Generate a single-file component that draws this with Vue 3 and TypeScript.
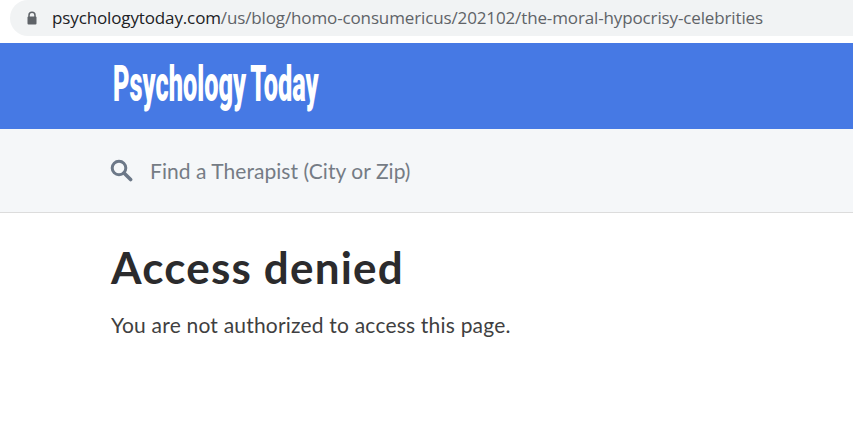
<script setup lang="ts">
const host = 'psychologytoday.com'
const path = '/us/blog/homo-consumericus/202102/the-moral-hypocrisy-celebrities'
</script>

<template>
  <div class="page">
    <div class="chrome">
      <div class="omnibox">
        <svg class="lock" width="12" height="14" viewBox="0 0 12 14" aria-hidden="true">
          <path d="M3 6V4.2a3 3 0 0 1 6 0V6" fill="none" stroke="#5f6368" stroke-width="1.5" />
          <rect x="1.5" y="5.5" width="9" height="8" rx="1" fill="#5f6368" />
        </svg>
        <span class="url"><span class="host">{{ host }}</span>{{ path }}</span>
      </div>
    </div>
    <header class="brand">
      <span class="logo">Psychology Today</span>
    </header>
    <div class="search">
      <svg class="glass" width="23" height="23" viewBox="0 0 23 23" aria-hidden="true">
        <circle cx="9" cy="9" r="6.8" fill="none" stroke="#6c7888" stroke-width="3" />
        <path d="M14 14l6.6 6.6" stroke="#6c7888" stroke-width="3.6" stroke-linecap="round" />
      </svg>
      <span class="placeholder">Find a Therapist (City or Zip)</span>
    </div>
    <main class="content">
      <h1>Access denied</h1>
      <p>You are not authorized to access this page.</p>
    </main>
  </div>
</template>

<style>
html, body { margin: 0; background: #fff; overflow: hidden; }
</style>

<style scoped>
.page { width: 853px; height: 421px; background: #fff; overflow: hidden; }
.chrome { height: 36px; padding: 0 0 0 10px; }
.omnibox {
  height: 36px; display: flex; align-items: center; gap: 14px; padding-left: 16px;
  background: #f1f3f4; border-radius: 18px 0 0 18px;
}
.lock { flex: none; }
.url { font: 17px/36px "Open Sans", sans-serif; color: #5f6368; letter-spacing: -0.13px; white-space: nowrap; }
.host { color: #202124; }
.brand {
  margin-top: 7px; height: 86px; background: #4679e4; padding-left: 113px;
  display: flex; align-items: center; overflow: hidden;
}
.logo {
  display: inline-block; font: 900 50px/60px Roboto, sans-serif; color: #fff; word-spacing: -3px;
  white-space: nowrap; transform: scale(0.507, 1); transform-origin: left center; margin-bottom: 5px;
}
.search {
  height: 83px; background: #f5f7f9; border-bottom: 1px solid #dcdcdc;
  display: flex; align-items: center; gap: 17px; padding-left: 110px;
}
.placeholder { font: 21px/30px Lato, sans-serif; color: #757c85; letter-spacing: 0.05px; }
.content { padding: 27px 0 0 111px; }
h1 { margin: 0; font: 700 44px/54px Lato, sans-serif; color: #2b2b2d; letter-spacing: 1.2px; }
p { margin: 18px 0 0; font: 21px/26px Lato, sans-serif; color: #3f3f41; letter-spacing: 0.2px; }
</style>
